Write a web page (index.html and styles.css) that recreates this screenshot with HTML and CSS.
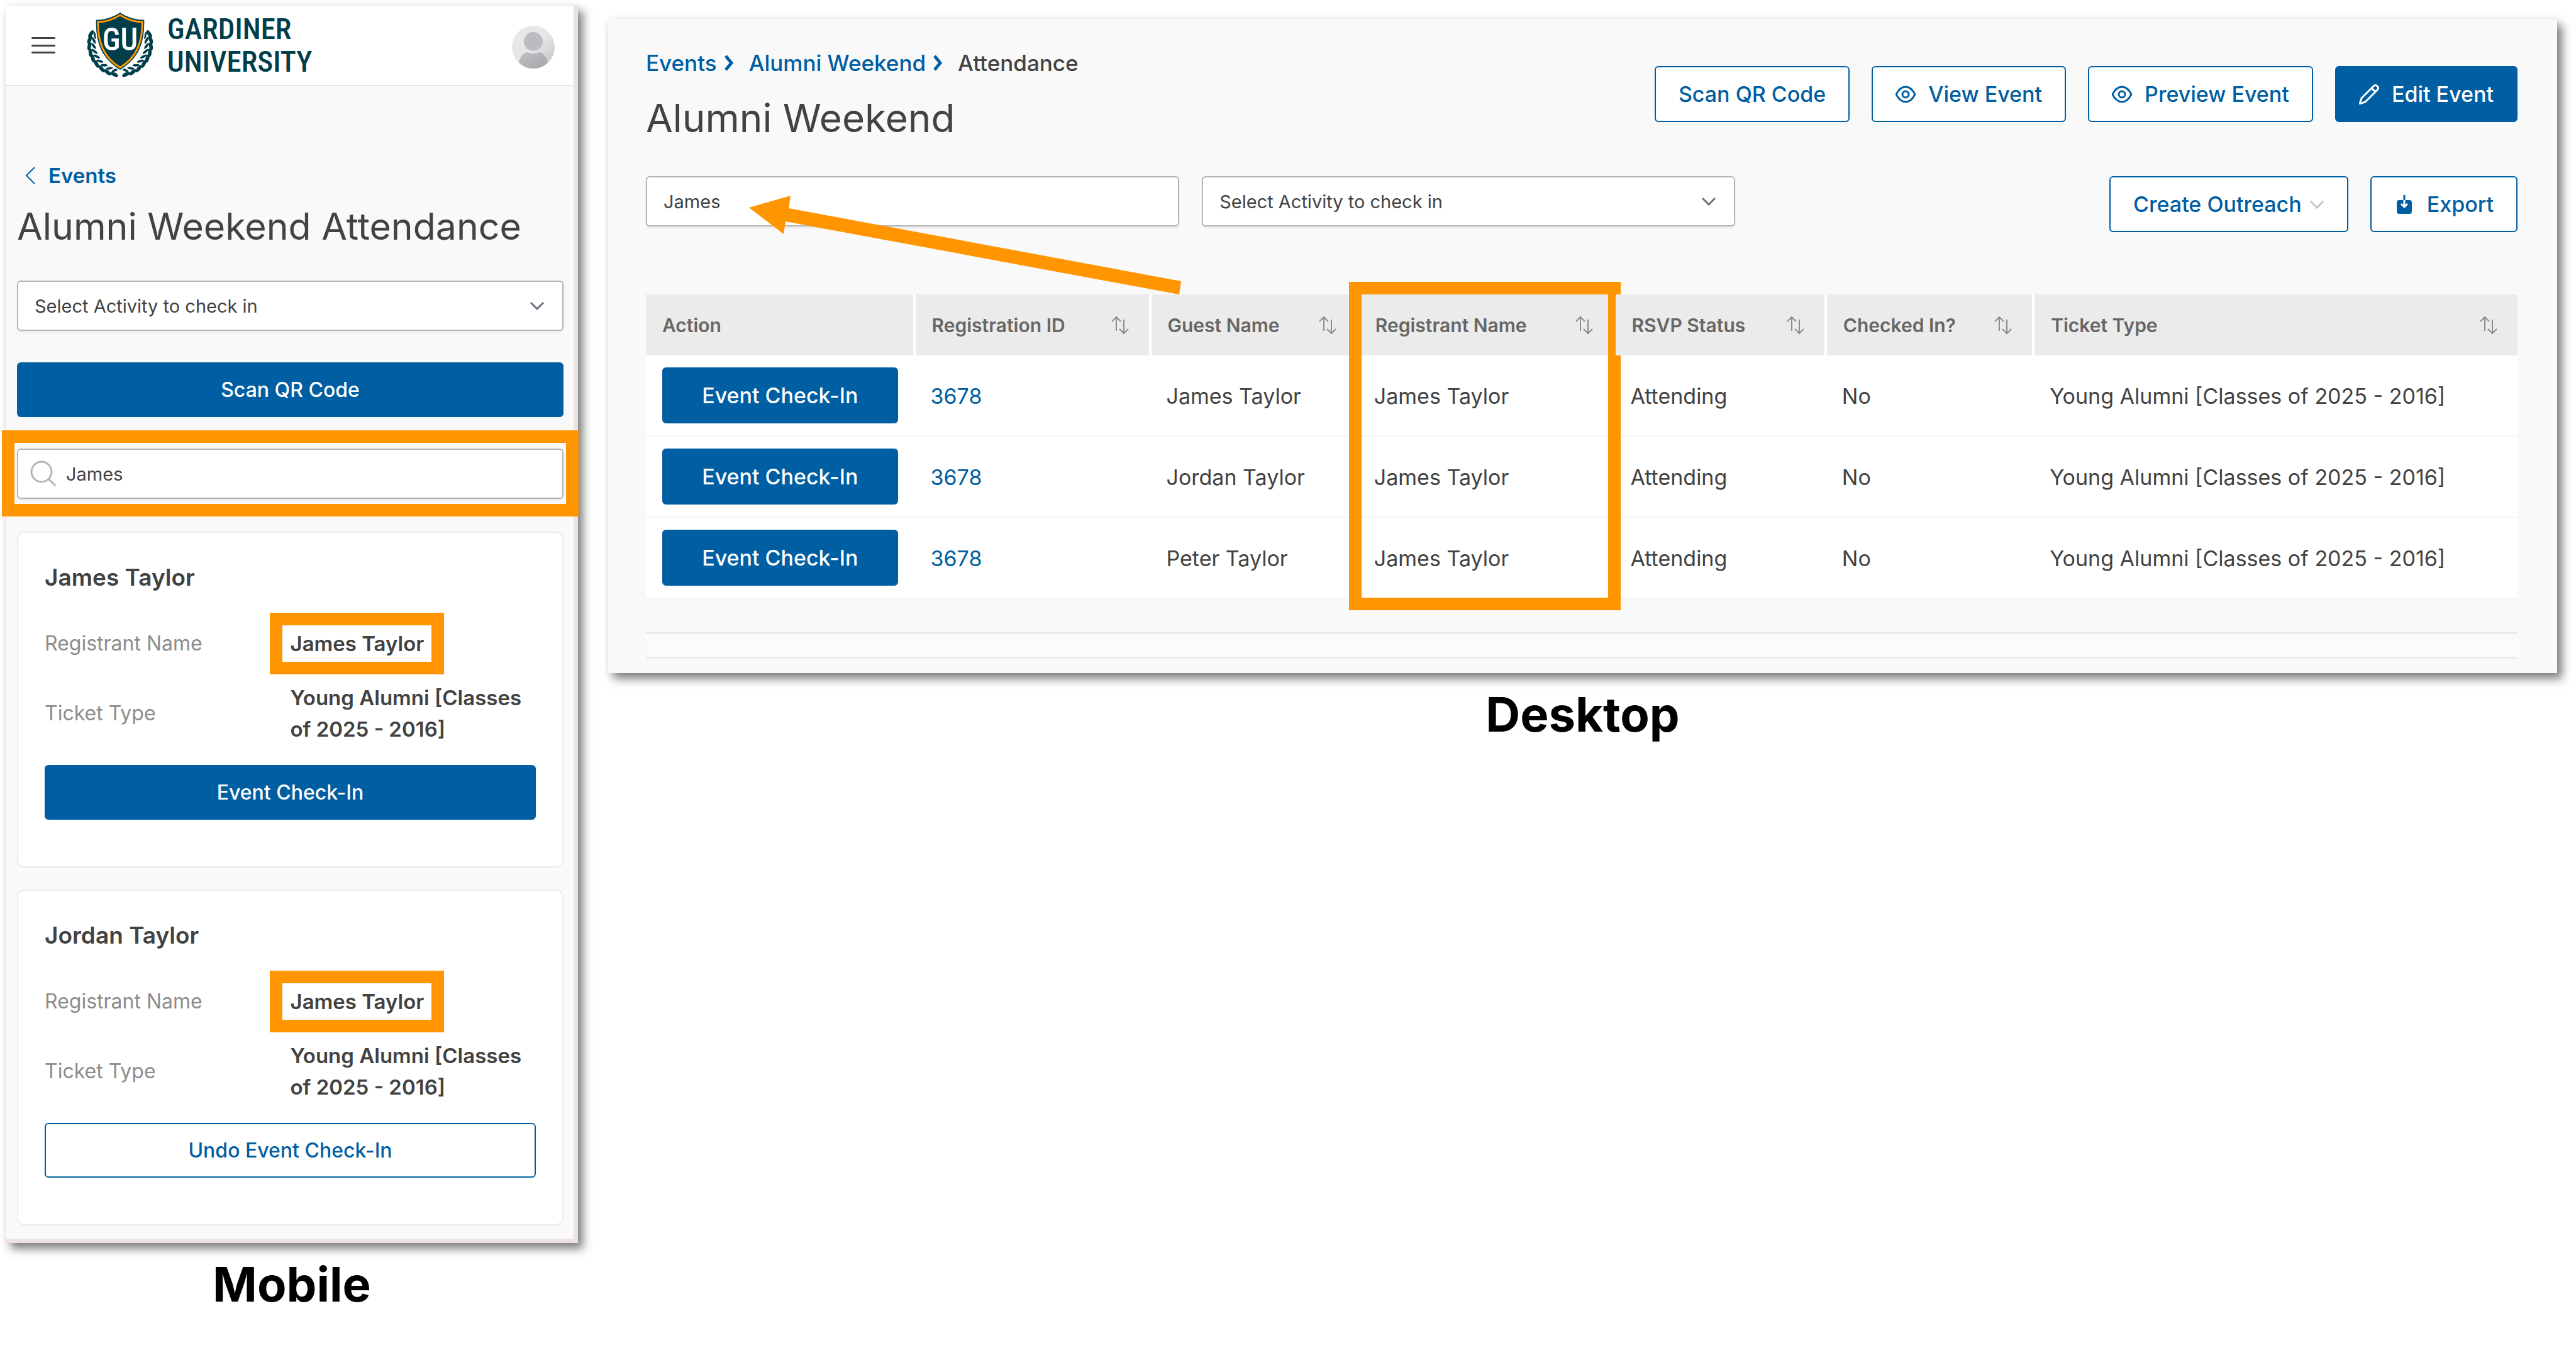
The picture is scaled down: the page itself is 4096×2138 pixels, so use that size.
FILE: index.html
```html
<!DOCTYPE html>
<html lang="en">
<head>
<meta charset="utf-8">
<title>Alumni Weekend Attendance</title>
<link rel="stylesheet" href="styles.css">
</head>
<body>

<!-- shared icons -->
<svg class="defs" aria-hidden="true">
	<symbol id="chevron" viewBox="0 0 24 14"><path d="M2 2l10 10L22 2"/></symbol>
	<symbol id="crumb" viewBox="0 0 16 26"><path d="M3 2l9 11-9 11"/></symbol>
	<symbol id="sort" viewBox="0 0 30 30"><path d="M9 24V2M2 9l7-7 7 7M21 6v22M14 21l7 7 7-7"/></symbol>
	<symbol id="eye" viewBox="0 0 32 32"><path d="M1 16C5 8 10 4 16 4s11 4 15 12c-4 8-9 12-15 12S5 24 1 16z"/><circle cx="16" cy="16" r="5"/></symbol>
	<symbol id="pencil" viewBox="0 0 32 32"><path d="M1 31l3-9L23 3q3-3 6 0t0 6L10 28zM21 5q0 5 6 6"/></symbol>
</svg>

<div class="page">

	<section class="column">
		<div class="panel mobile">
			<header class="topbar">
				<button class="menu" aria-label="Menu"><span></span><span></span><span></span></button>
				<svg class="crest" viewBox="0 0 108 108" aria-hidden="true">
					<defs>
						<g id="leaves">
							<ellipse cx="54" cy="102" rx="7" ry="3" transform="rotate(14 54 102)"/>
							<ellipse cx="54" cy="95" rx="6" ry="2" transform="rotate(-34 54 95)"/>
						</g>
						<g id="branch">
							<use href="#leaves" transform="rotate(11 54 52)"/>
							<use href="#leaves" transform="rotate(24 54 52)"/>
							<use href="#leaves" transform="rotate(37 54 52)"/>
							<use href="#leaves" transform="rotate(50 54 52)"/>
							<use href="#leaves" transform="rotate(62 54 52)"/>
							<use href="#leaves" transform="rotate(74 54 52)"/>
							<use href="#leaves" transform="rotate(86 54 52)"/>
							<use href="#leaves" transform="rotate(98 54 52)"/>
							<use href="#leaves" transform="rotate(109 54 52)"/>
						</g>
					</defs>
					<g fill="#003e4a">
						<use href="#branch"/>
						<use href="#branch" transform="translate(108 0) scale(-1 1)"/>
					</g>
					<path d="M54 0C42 8 28 12 14 12C13 50 22 75 54 95C86 75 95 50 94 12C80 12 66 8 54 0Z" fill="#003e4a" stroke="#fff" stroke-width="2"/>
					<path d="M54 5C43 12 31 16 18 16C18 50 27 73 54 90C81 73 90 50 90 16C77 16 65 12 54 5Z" fill="none" stroke="#ff9500" stroke-width="3"/>
					<text class="crest-text" x="54" y="62" text-anchor="middle">GU</text>
				</svg>
				<div class="brand"><span>GARDINER</span><span>UNIVERSITY</span></div>
				<svg class="avatar" viewBox="0 0 68 68" role="img" aria-label="Profile">
					<defs>
						<clipPath id="round"><circle cx="34" cy="34" r="34"/></clipPath>
						<linearGradient id="back" x2="1" y2="1"><stop offset=".5" stop-color="#e6e7e9"/><stop offset="1" stop-color="#bfc0c3"/></linearGradient>
						<linearGradient id="person" x2="1" y2="1"><stop offset="0" stop-color="#bec0c3"/><stop offset="1" stop-color="#a5a6aa"/></linearGradient>
					</defs>
					<g clip-path="url(#round)">
						<path d="M0 0h68v68H0z" fill="url(#back)"/>
						<circle cx="34" cy="25" r="15" fill="#babcbf"/>
						<path d="M11 68V60C12 50 17 44 24 42q10 4 20 0c7 2 12 8 13 18v8z" fill="url(#person)"/>
					</g>
				</svg>
			</header>
			<main class="mobile-body">
				<a class="back" href="#"><svg viewBox="0 0 18 30" aria-hidden="true"><path d="M16 2L3 15l13 13"/></svg>Events</a>
				<h1 class="mobile-title">Alumni Weekend Attendance</h1>
				<div class="field select">
					<select aria-label="Activity"><option>Select Activity to check in</option></select>
					<svg aria-hidden="true"><use href="#chevron"/></svg>
				</div>
				<button class="btn solid wide">Scan QR Code</button>
				<div class="field search">
					<svg viewBox="0 0 42 42" aria-hidden="true"><circle cx="18" cy="18" r="16"/><path d="M30 30l10 10"/></svg>
					<input type="text" aria-label="Search guests" value="James">
					<div class="mark mark-search"></div>
				</div>
				<article class="card">
					<h2>James Taylor</h2>
					<dl>
						<dt>Registrant Name</dt>
						<dd><span class="marked">James Taylor<i class="mark mark-name"></i></span></dd>
						<dt>Ticket Type</dt>
						<dd>Young Alumni [Classes of 2025 - 2016]</dd>
					</dl>
					<button class="btn solid wide">Event Check-In</button>
				</article>
				<article class="card">
					<h2>Jordan Taylor</h2>
					<dl>
						<dt>Registrant Name</dt>
						<dd><span class="marked">James Taylor<i class="mark mark-name"></i></span></dd>
						<dt>Ticket Type</dt>
						<dd>Young Alumni [Classes of 2025 - 2016]</dd>
					</dl>
					<button class="btn wide">Undo Event Check-In</button>
				</article>
			</main>
		</div>
		<p class="caption">Mobile</p>
	</section>

	<section class="column">
		<div class="panel desktop">
			<div class="head">
				<div>
					<nav class="crumbs">
						<a href="#">Events</a><svg aria-hidden="true"><use href="#crumb"/></svg>
						<a href="#">Alumni Weekend</a><svg aria-hidden="true"><use href="#crumb"/></svg>
						<span>Attendance</span>
					</nav>
					<h1 class="desktop-title">Alumni Weekend</h1>
				</div>
				<div class="actions">
					<button class="btn">Scan QR Code</button>
					<button class="btn"><svg class="icon" aria-hidden="true"><use href="#eye"/></svg>View Event</button>
					<button class="btn"><svg class="icon" aria-hidden="true"><use href="#eye"/></svg>Preview Event</button>
					<button class="btn solid"><svg class="icon" aria-hidden="true"><use href="#pencil"/></svg>Edit Event</button>
				</div>
			</div>
			<div class="filters">
				<div class="field">
					<input type="text" aria-label="Search" value="James">
				</div>
				<div class="field select">
					<select aria-label="Check in activity"><option>Select Activity to check in</option></select>
					<svg aria-hidden="true"><use href="#chevron"/></svg>
				</div>
				<div class="tools">
					<button class="btn">Create Outreach<svg class="drop" aria-hidden="true"><use href="#chevron"/></svg></button>
					<button class="btn"><svg class="icon" viewBox="0 0 32 32" aria-hidden="true"><path d="M8 9h16q4 0 4 4v14q0 4-4 4H8q-4 0-4-4V13q0-4 4-4z" fill="#005ea2" stroke="none"/><path d="M16 1v8"/><path d="M16 9v10M11 15l5 5 5-5" stroke="#fff"/></svg>Export</button>
				</div>
			</div>
			<table>
				<colgroup>
					<col class="c-action"><col class="c-id"><col class="c-guest"><col class="c-registrant"><col class="c-status"><col class="c-checked"><col>
				</colgroup>
				<thead>
					<tr>
						<th>Action</th>
						<th>Registration ID<svg aria-hidden="true"><use href="#sort"/></svg></th>
						<th>Guest Name<svg aria-hidden="true"><use href="#sort"/></svg></th>
						<th>Registrant Name<svg aria-hidden="true"><use href="#sort"/></svg><i class="mark mark-column"></i></th>
						<th>RSVP Status<svg aria-hidden="true"><use href="#sort"/></svg></th>
						<th>Checked In?<svg aria-hidden="true"><use href="#sort"/></svg></th>
						<th>Ticket Type<svg aria-hidden="true"><use href="#sort"/></svg></th>
					</tr>
				</thead>
				<tbody>
					<tr>
						<td><button class="btn solid wide">Event Check-In</button></td>
						<td><a href="#">3678</a></td>
						<td>James Taylor</td>
						<td>James Taylor</td>
						<td>Attending</td>
						<td>No</td>
						<td>Young Alumni [Classes of 2025 - 2016]</td>
					</tr>
					<tr>
						<td><button class="btn solid wide">Event Check-In</button></td>
						<td><a href="#">3678</a></td>
						<td>Jordan Taylor</td>
						<td>James Taylor</td>
						<td>Attending</td>
						<td>No</td>
						<td>Young Alumni [Classes of 2025 - 2016]</td>
					</tr>
					<tr>
						<td><button class="btn solid wide">Event Check-In</button></td>
						<td><a href="#">3678</a></td>
						<td>Peter Taylor</td>
						<td>James Taylor</td>
						<td>Attending</td>
						<td>No</td>
						<td>Young Alumni [Classes of 2025 - 2016]</td>
					</tr>
				</tbody>
			</table>
			<div class="pager"></div>
			<svg class="arrow" viewBox="0 0 688 158" aria-hidden="true"><path d="M0 19L66 0L63 20L687 136L684 157L58 41L55 61Z"/></svg>
		</div>
		<p class="caption">Desktop</p>
	</section>

</div>
</body>
</html>
```

FILE: styles.css
```css
*{
	box-sizing:border-box;
}
body{
	margin:0;
	background:#fff;
	color:#424242;
	font-family:Inter, "Liberation Sans", sans-serif;
	font-size:32px;
}
h1, h2, p, dl, dd{
	margin:0;
}
a{
	color:#005ea2;
	text-decoration:none;
}
svg{
	fill:none;
	stroke:currentColor;
	stroke-width:3;
	flex:none;
}
.defs{
	position:absolute;
	width:0;
	height:0;
}
.page{
	display:grid;
	grid-template-columns:910fr 3099fr;
	gap:48px;
	align-items:start;
	padding:9px 30px 0 9px;
}
.column + .column{
	padding-top:21px;
}
.panel{
	position:relative;
	background:#f9f9f9;
	box-shadow:8px 9px 14px rgba(0,0,0,.5), 0 0 10px rgba(0,0,0,.05);
}
.caption{
	margin-top:20px;
	color:#000;
	font-size:76px;
	font-weight:700;
	line-height:90px;
	text-align:center;
}

/* orange callouts */
.mark{
	position:absolute;
	border:20px solid #ff9500;
	pointer-events:none;
}
.mark-search{
	inset:-29px -24px -28px -24px;
}
.mark-name{
	inset:-24px -32px -24px -33px;
}
.mark-column{
	top:-20px;
	left:-16px;
	right:-12px;
	height:522px;
}
.arrow{
	position:absolute;
	left:224px;
	top:281px;
	width:688px;
	height:158px;
	fill:#ff9500;
	stroke:none;
}

/* controls */
.btn{
	display:inline-flex;
	align-items:center;
	justify-content:center;
	height:89px;
	padding:0 36px;
	background:#fff;
	border:2px solid #005ea2;
	border-radius:6px;
	color:#005ea2;
	font:500 34px Inter, "Liberation Sans", sans-serif;
	white-space:nowrap;
}
.solid{
	background:#005ea2;
	color:#fff;
}
.wide{
	width:100%;
}
.icon{
	width:32px;
	height:32px;
	margin-right:20px;
}
.field{
	position:relative;
	height:80px;
}
.field input, .field select{
	width:100%;
	height:100%;
	padding:0 26px;
	background:#fff;
	border:2px solid #b4b4b4;
	border-radius:6px;
	box-shadow:0 3px 4px rgba(0,0,0,.06);
	color:#424242;
	font:29px Inter, "Liberation Sans", sans-serif;
	appearance:none;
}
.select svg{
	position:absolute;
	right:30px;
	top:33px;
	width:24px;
	height:14px;
	color:#6b7280;
}

/* mobile */
.mobile{
	border:solid #ede2e0;
	border-width:0 7px 7px 0;
}
.topbar{
	display:flex;
	align-items:center;
	height:128px;
	padding:0 30px 0 41px;
	background:#fff;
	border-bottom:2px solid #e4e4e4;
}
.menu{
	display:flex;
	flex-direction:column;
	justify-content:space-between;
	width:38px;
	height:26px;
	margin-right:50px;
	padding:0;
	background:none;
	border:0;
}
.menu span{
	height:3px;
	background:#424242;
	border-radius:2px;
}
.crest{
	width:106px;
	height:106px;
	margin-right:22px;
	stroke:none;
}
.crest-text{
	fill:#fff;
	font:500 50px "Roboto Condensed", "Open Sans Condensed", "Liberation Sans Narrow", sans-serif;
}
.brand{
	display:flex;
	flex-direction:column;
	color:#003e4a;
	font:500 47px/52px "Roboto Condensed", "Open Sans Condensed", "Liberation Sans Narrow", sans-serif;
}
.avatar{
	width:68px;
	height:68px;
	margin:6px 0 0 auto;
	stroke:none;
}
.mobile-body{
	padding:122px 16px 21px 18px;
}
.back{
	display:flex;
	align-items:center;
	gap:20px;
	padding-left:12px;
	font-size:33px;
	font-weight:600;
	line-height:40px;
}
.back svg{
	width:18px;
	height:30px;
	stroke-width:2;
}
.mobile-title{
	margin:25px 0 50px;
	font-size:59px;
	font-weight:400;
	line-height:72px;
	white-space:nowrap;
}
.mobile .btn{
	height:87px;
	font-size:32px;
}
.mobile-body > .btn{
	margin:50px 0;
}
.search{
	margin-bottom:52px;
}
.search input{
	padding-left:76px;
}
.search svg{
	position:absolute;
	left:21px;
	top:19px;
	width:42px;
	height:42px;
	color:#b4b4b4;
}
.card{
	padding:49px 42px 74px;
	background:#fff;
	border:2px solid #ececec;
	border-radius:12px;
}
.card + .card{
	margin-top:35px;
}
.card h2{
	font-size:37px;
	font-weight:600;
	line-height:44px;
}
.card dl{
	display:grid;
	grid-template-columns:1fr 1fr;
	row-gap:36px;
	align-items:center;
	margin:58px 0 32px;
	line-height:50px;
}
.card dt{
	color:#8c8c8c;
}
.card dd{
	font-size:33px;
	font-weight:600;
}
.marked{
	position:relative;
	display:inline-block;
}

/* desktop */
.desktop{
	padding:50px 63px 23px 60px;
}
.head{
	display:flex;
	justify-content:space-between;
}
.crumbs{
	display:flex;
	align-items:center;
	font-size:35px;
	font-weight:500;
	line-height:40px;
}
.crumbs svg{
	width:16px;
	height:26px;
	margin:0 24px 0 11px;
	color:#005ea2;
	stroke-width:5;
}
.desktop-title{
	margin-top:30px;
	font-size:62px;
	font-weight:400;
	line-height:76px;
}
.actions, .tools{
	display:flex;
	gap:35px;
}
.actions{
	margin-top:25px;
}
.filters{
	display:flex;
	align-items:flex-start;
	gap:36px;
	margin:54px 0 99px;
}
.filters .field{
	flex:0 0 28.5%;
}
.tools{
	margin-left:auto;
}
.drop{
	width:24px;
	height:14px;
	margin-left:12px;
	color:#c4c4c4;
}
table{
	width:100%;
	border-spacing:0;
	table-layout:fixed;
	font-size:34px;
}
.c-action{width:14.4%;}
.c-id{width:12.6%;}
.c-guest{width:11.1%;}
.c-registrant{width:13.7%;}
.c-status{width:11.3%;}
.c-checked{width:11.1%;}
th{
	position:relative;
	height:97px;
	padding:0 26px;
	background:#ebebeb;
	border-right:4px solid #fff;
	color:#666;
	font-size:30px;
	font-weight:600;
	text-align:left;
	white-space:nowrap;
}
th:last-child{
	border-right:0;
}
th > svg{
	position:absolute;
	right:31px;
	top:34px;
	width:30px;
	height:30px;
	color:#8c8c8c;
	stroke-width:2;
}
td{
	height:129px;
	padding:2px 24px 0;
	background:#fff;
	border-bottom:2px solid #f5f5f5;
	white-space:nowrap;
}
td:first-child{
	padding:0 28px 0 26px;
}
.pager{
	height:42px;
	margin-top:53px;
	background:#fbfbfb;
	border:solid #e9e9e9;
	border-width:3px 0;
}
```
